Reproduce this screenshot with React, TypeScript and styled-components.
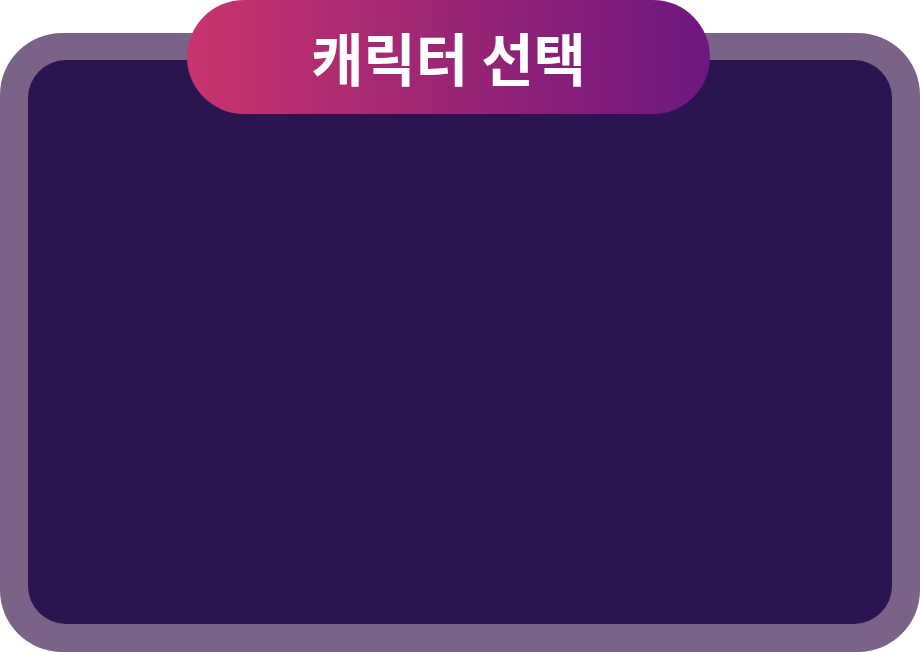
import React from "react";
import styled, { createGlobalStyle } from "styled-components";

const Global = createGlobalStyle`
  html, body { margin: 0; padding: 0; background: #ffffff; }
  body { font-family: "Noto Sans CJK KR", "Noto Sans", sans-serif; }
`;

const Stage = styled.div`
  position: relative;
  width: 920px;
  height: 652px;
  padding-top: 33px;
  box-sizing: border-box;
`;

const Frame = styled.div`
  width: 920px;
  height: 619px;
  box-sizing: border-box;
  background: #7b6387;
  border-radius: 62px;
  padding: 27px 28px 28px 28px;
  display: flex;
`;

const Panel = styled.div`
  flex: 1;
  background: #2a1550;
  border-radius: 38px;
`;

const TitlePill = styled.div`
  position: absolute;
  top: 0;
  left: 187px;
  width: 523px;
  height: 114px;
  border-radius: 57px;
  background: linear-gradient(90deg, #c9346d 0%, #a42872 40%, #6d1780 100%);
  display: flex;
  align-items: center;
  justify-content: center;
`;

const Title = styled.h1`
  margin: 0;
  color: #ffffff;
  font-family: "Noto Sans CJK KR", "Noto Sans", sans-serif;
  font-weight: 700;
  font-size: 57px;
  letter-spacing: 0px;
  line-height: 1;
  padding-bottom: 2px;
`;

export default function App() {
  return (
    <>
      <Global />
      <Stage>
        <Frame>
          <Panel />
        </Frame>
        <TitlePill>
          <Title>캐릭터 선택</Title>
        </TitlePill>
      </Stage>
    </>
  );
}
